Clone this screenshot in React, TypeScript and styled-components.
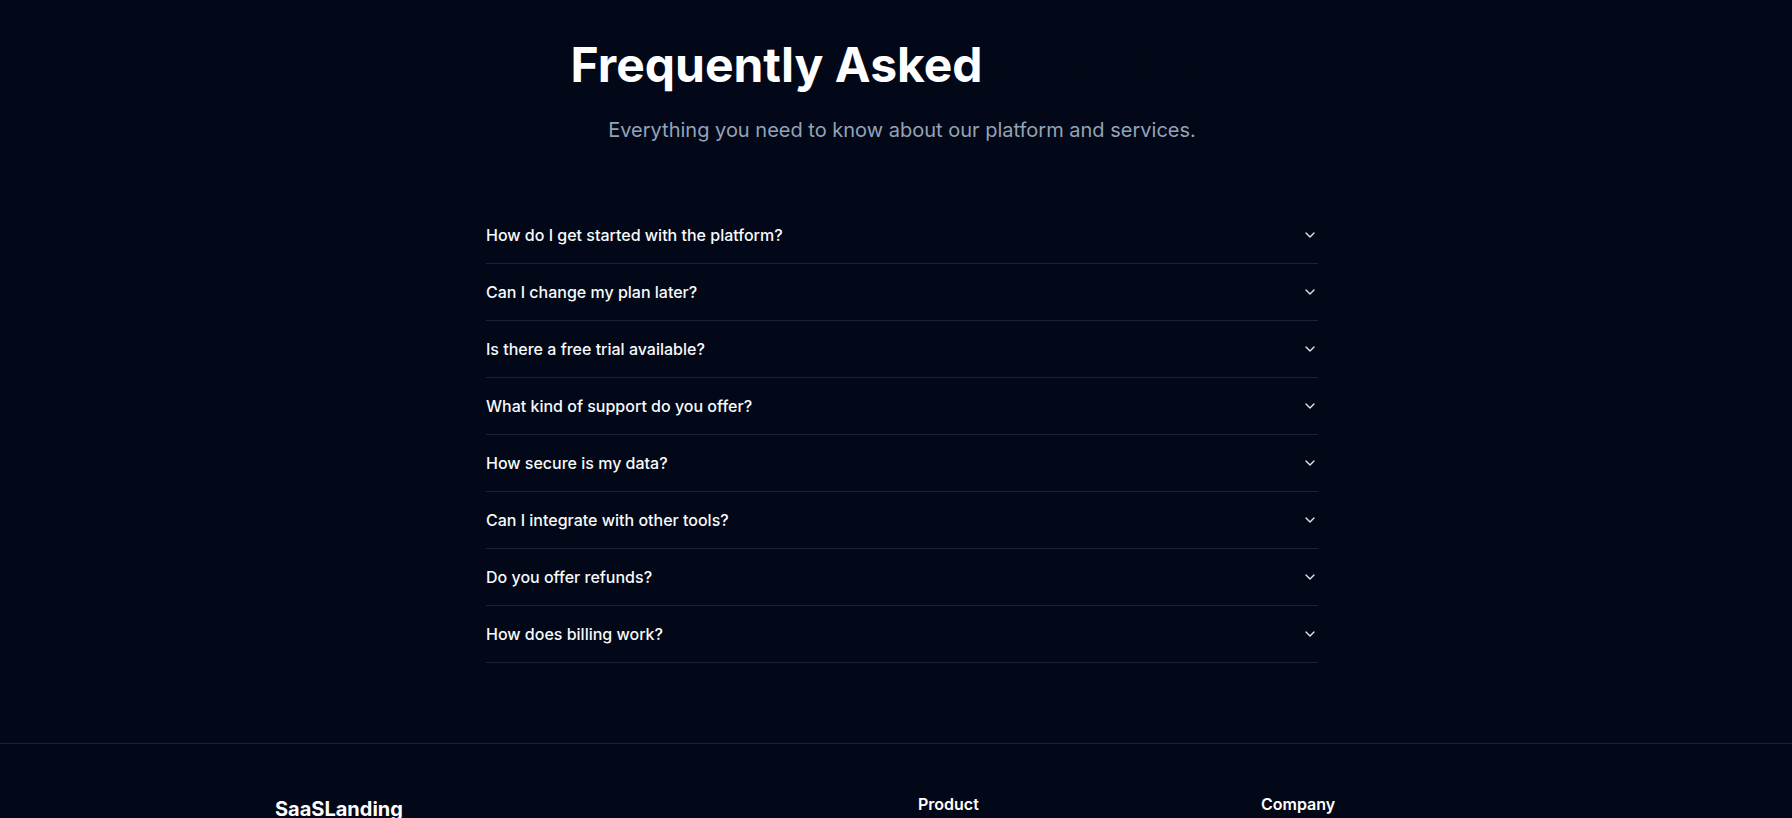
import React from "react";
import styled, { createGlobalStyle } from "styled-components";

const GlobalStyle = createGlobalStyle`
  * { box-sizing: border-box; }
  html, body { margin: 0; padding: 0; background: #020817; }
  body {
    font-family: Inter, "Noto Sans", "Liberation Sans", sans-serif;
    color: #f8fafc;
    -webkit-font-smoothing: antialiased;
  }
`;

const Page = styled.div`
  min-height: 818px;
  background: #020817;
  overflow: hidden;
`;

const Section = styled.section`
  padding: 41px 0 80px 12px;
  display: flex;
  flex-direction: column;
  align-items: center;
`;

const Title = styled.h2`
  margin: 0 0 27px;
  font-size: 48px;
  line-height: 48px;
  font-weight: 700;
  color: #ffffff;
  text-align: center;
  white-space: nowrap;
`;

const Hidden = styled.span`
  color: transparent;
  background: linear-gradient(90deg, #020817, #020817);
  -webkit-background-clip: text;
  background-clip: text;
`;

const Subtitle = styled.p`
  margin: 0 0 63px;
  font-size: 20px;
  line-height: 28px;
  color: #94a3b8;
  text-align: center;
`;

const List = styled.div`
  width: 832px;
  display: flex;
  flex-direction: column;
`;

const Item = styled.div`
  border-bottom: 1px solid #1a2233;
`;

const Trigger = styled.button`
  width: 100%;
  display: flex;
  align-items: center;
  justify-content: space-between;
  padding: 16px 0;
  background: none;
  border: none;
  color: #f8fafc;
  font-family: inherit;
  font-size: 16px;
  line-height: 24px;
  font-weight: 500;
  text-align: left;
  cursor: pointer;
`;

const Chevron = styled.svg`
  width: 16px;
  height: 16px;
  flex-shrink: 0;
  color: #e2e8f0;
`;

const Footer = styled.footer`
  border-top: 1px solid #1a2233;
  padding: 48px 0 0 275px;
`;

const FooterGrid = styled.div`
  display: grid;
  grid-template-columns: 643px 343px 300px;
  align-items: start;
`;

const Brand = styled.div`
  font-size: 20px;
  line-height: 28px;
  font-weight: 700;
  color: #ffffff;
  margin-top: 3px;
`;

const ColTitle = styled.h4`
  margin: 0;
  font-size: 16px;
  line-height: 24px;
  font-weight: 600;
  color: #ffffff;
`;

const questions = [
  "How do I get started with the platform?",
  "Can I change my plan later?",
  "Is there a free trial available?",
  "What kind of support do you offer?",
  "How secure is my data?",
  "Can I integrate with other tools?",
  "Do you offer refunds?",
  "How does billing work?",
];

export default function App() {
  return (
    <Page>
      <GlobalStyle />
      <Section>
        <Title>
          Frequently Asked <Hidden>Questions</Hidden>
        </Title>
        <Subtitle>Everything you need to know about our platform and services.</Subtitle>
        <List>
          {questions.map((q) => (
            <Item key={q}>
              <Trigger>
                <span>{q}</span>
                <Chevron viewBox="0 0 24 24" fill="none" stroke="currentColor" strokeWidth={2} strokeLinecap="round" strokeLinejoin="round">
                  <path d="m6 9 6 6 6-6" />
                </Chevron>
              </Trigger>
            </Item>
          ))}
        </List>
      </Section>
      <Footer>
        <FooterGrid>
          <Brand>SaaSLanding</Brand>
          <ColTitle>Product</ColTitle>
          <ColTitle>Company</ColTitle>
        </FooterGrid>
      </Footer>
    </Page>
  );
}
